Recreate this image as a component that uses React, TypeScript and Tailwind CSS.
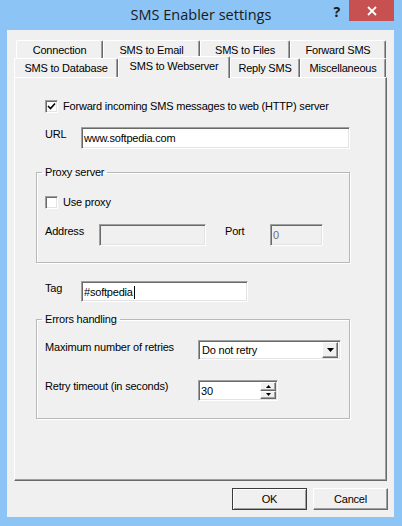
import React from "react";

const ROW1 = [
  { label: "Connection", w: "w-[87px]" },
  { label: "SMS to Email", w: "w-[97px]" },
  { label: "SMS to Files", w: "w-[90px]" },
  { label: "Forward SMS", w: "w-[96px]" },
];

const ROW2 = [
  { label: "SMS to Database", w: "w-[104px]", active: false },
  { label: "SMS to Webserver", w: "w-[112px]", active: true },
  { label: "Reply SMS", w: "w-[70px]", active: false },
  { label: "Miscellaneous", w: "w-[86px]", active: false },
];

const sunken =
  "border border-t-[#a0a0a0] border-l-[#a0a0a0] border-r-white border-b-white shadow-[inset_1px_1px_0_#696969,inset_-1px_-1px_0_#e3e3e3]";
const raised =
  "border border-t-white border-l-white border-r-[#696969] border-b-[#696969] shadow-[inset_-1px_-1px_0_#a0a0a0]";

const Tab = ({ label, w, active }: { label: string; w: string; active?: boolean }) => (
  <div
    className={`${w} ${
      active ? "relative z-10 -mt-[2px] h-[22px]" : "h-full"
    } flex justify-center pt-[3px] leading-[13px] bg-[#f0f0f0] rounded-t-[2px] border-t border-l border-t-white border-l-white border-r border-r-[#696969] shadow-[inset_-1px_0_0_#a0a0a0]`}
  >
    {label}
  </div>
);

const Checkbox = ({ checked }: { checked?: boolean }) => (
  <div className={`w-[13px] h-[13px] bg-white ${sunken} flex items-center justify-center`}>
    {checked && (
      <svg width="9" height="9" viewBox="0 0 9 9">
        <path d="M1 4 L3.5 6.5 L8 1.5" stroke="#000" strokeWidth="1.6" fill="none" />
      </svg>
    )}
  </div>
);

const Group = ({ title, className, children }: { title: string; className: string; children: React.ReactNode }) => (
  <fieldset className={`w-[314px] border border-[#b8b8b8] shadow-[1px_1px_0_#fff,inset_1px_1px_0_#fff] px-[8px] ${className}`}>
    <legend className="-ml-[3px] px-[3px] leading-[13px]">{title}</legend>
    {children}
  </fieldset>
);

export default function App() {
  return (
    <div className="w-[402px] h-[526px] bg-[#8cc4f5] flex flex-col font-['Liberation_Sans',Arial,sans-serif] text-[11px] tracking-[-0.2px] text-black select-none">
      <div className="h-[30px] grid grid-cols-[1fr_auto_1fr]">
        <div />
        <div className="pt-[5px] text-[14.5px] leading-[20px] tracking-normal text-[#1a1a1a] font-['Open_Sans','Noto_Sans',sans-serif]">
          SMS Enabler settings
        </div>
        <div className="flex justify-end items-start pr-[8px]">
          <div className="mt-[3px] mr-[9px] text-[14px] font-bold leading-[18px] font-['Noto_Sans',sans-serif] text-[#1a1a1a]">?</div>
          <div className="w-[45px] h-[21px] bg-[#c75050] flex items-center justify-center">
            <svg width="10" height="10" viewBox="0 0 10 10">
              <path d="M1 1 L9 9 M9 1 L1 9" stroke="#fff" strokeWidth="1.8" />
            </svg>
          </div>
        </div>
      </div>

      <div className="flex-1 ml-[7px] mr-[8px] mb-[9px] bg-[#f0f0f0] flex flex-col pt-[10px]">
        <div className="flex pl-[9px] h-[18px]">
          {ROW1.map((t) => (
            <Tab key={t.label} label={t.label} w={t.w} />
          ))}
        </div>
        <div className="flex pl-[7px] h-[19px]">
          {ROW2.map((t) => (
            <Tab key={t.label} label={t.label} w={t.w} active={t.active} />
          ))}
        </div>

        <div className="mx-[7px] h-[404px] border-t border-l border-t-white border-l-white border-r border-b border-r-[#696969] border-b-[#696969] shadow-[inset_-1px_-1px_0_#a0a0a0] pl-[21px] pt-[22px]">
          <div className="flex items-center ml-[9px] h-[13px]">
            <Checkbox checked />
            <span className="ml-[5px] leading-[13px]">Forward incoming SMS messages to web (HTTP) server</span>
          </div>

          <div className="flex ml-[9px] mt-[14px]">
            <span className="w-[36px] pt-[1px] leading-[13px]">URL</span>
            <div className={`w-[269px] h-[22px] bg-white ${sunken} flex items-center pl-[2px] pt-[1px]`}>www.softpedia.com</div>
          </div>

          <Group title="Proxy server" className="mt-[17px] pb-[16px]">
            <div className="flex items-center mt-[17px] h-[13px]">
              <Checkbox />
              <span className="ml-[5px] leading-[13px]">Use proxy</span>
            </div>
            <div className="flex mt-[15px]">
              <span className="w-[54px] pt-[1px] leading-[13px]">Address</span>
              <div className={`w-[107px] h-[22px] bg-[#f0f0f0] ${sunken}`} />
              <span className="ml-[19px] w-[45px] pt-[1px] leading-[13px]">Port</span>
              <div className={`w-[53px] h-[22px] bg-[#f0f0f0] ${sunken} flex items-center pl-[2px] pt-[1px] text-[#6d6d6d]`}>0</div>
            </div>
          </Group>

          <div className="flex ml-[9px] mt-[18px]">
            <span className="w-[36px] pt-[1px] leading-[13px]">Tag</span>
            <div className={`w-[167px] h-[21px] bg-white ${sunken} flex items-center pl-[2px] pt-[1px]`}>
              #softpedia
              <span className="w-px h-[13px] bg-black ml-px" />
            </div>
          </div>

          <Group title="Errors handling" className="mt-[11px] pb-[17px]">
            <div className="flex mt-[14px]">
              <span className="w-[153px] pt-[1px] leading-[13px]">Maximum number of retries</span>
              <div className={`w-[143px] h-[20px] bg-white ${sunken} flex items-center justify-between pl-[3px] pr-[2px]`}>
                <span className="pt-[1px]">Do not retry</span>
                <div className={`w-[16px] h-[16px] bg-[#f0f0f0] ${raised} flex items-center justify-center`}>
                  <svg width="7" height="4" viewBox="0 0 7 4">
                    <path d="M0 0 H7 L3.5 4 Z" fill="#000" />
                  </svg>
                </div>
              </div>
            </div>
            <div className="flex mt-[20px]">
              <span className="w-[153px] leading-[13px]">Retry timeout (in seconds)</span>
              <div className={`w-[80px] h-[21px] bg-white ${sunken} flex items-center justify-between pl-[2px] pr-[1px]`}>
                <span className="pt-[1px]">30</span>
                <div className="flex flex-col w-[16px] h-[17px]">
                  <div className={`flex-1 bg-[#f0f0f0] ${raised} flex items-center justify-center`}>
                    <svg width="5" height="3" viewBox="0 0 5 3">
                      <path d="M0 3 H5 L2.5 0 Z" fill="#000" />
                    </svg>
                  </div>
                  <div className={`flex-1 bg-[#f0f0f0] ${raised} flex items-center justify-center`}>
                    <svg width="5" height="3" viewBox="0 0 5 3">
                      <path d="M0 0 H5 L2.5 3 Z" fill="#000" />
                    </svg>
                  </div>
                </div>
              </div>
            </div>
          </Group>
        </div>

        <div className="flex justify-end gap-[6px] mt-[7px] pr-[6px]">
          <div className="w-[75px] h-[22px] bg-[#f0f0f0] border border-[#3c3c3c] shadow-[inset_1px_1px_0_#fff,inset_-1px_-1px_0_#a0a0a0] flex items-center justify-center">
            OK
          </div>
          <div className={`w-[75px] h-[22px] bg-[#f0f0f0] ${raised} flex items-center justify-center`}>Cancel</div>
        </div>
      </div>
    </div>
  );
}
